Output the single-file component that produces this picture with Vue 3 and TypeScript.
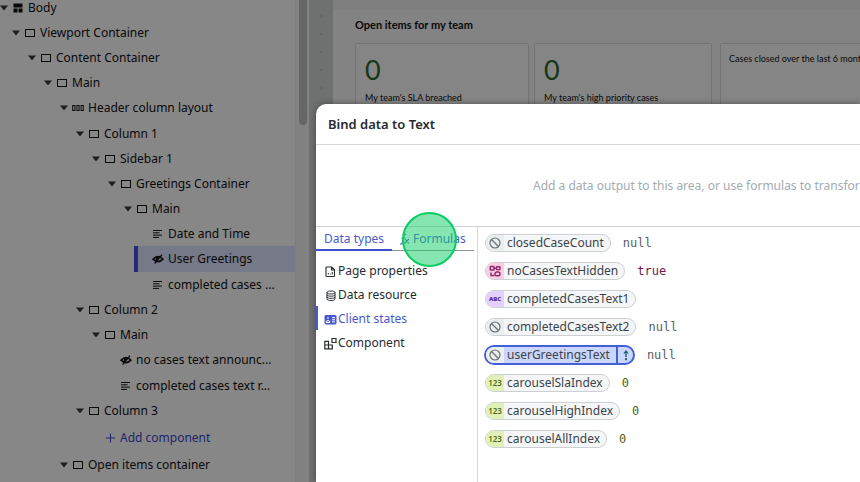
<script setup lang="ts">
import { ref } from 'vue'

type RowIcon = 'body' | 'box' | 'columns' | 'text' | 'hidden' | 'add'

interface TreeRow {
  label: string
  depth: number
  icon: RowIcon
  open?: boolean
  selected?: boolean
}

const rows: TreeRow[] = [
  { label: 'Body', depth: 0, icon: 'body', open: true },
  { label: 'Viewport Container', depth: 1, icon: 'box', open: true },
  { label: 'Content Container', depth: 2, icon: 'box', open: true },
  { label: 'Main', depth: 3, icon: 'box', open: true },
  { label: 'Header column layout', depth: 4, icon: 'columns', open: true },
  { label: 'Column 1', depth: 5, icon: 'box', open: true },
  { label: 'Sidebar 1', depth: 6, icon: 'box', open: true },
  { label: 'Greetings Container', depth: 7, icon: 'box', open: true },
  { label: 'Main', depth: 8, icon: 'box', open: true },
  { label: 'Date and Time', depth: 9, icon: 'text' },
  { label: 'User Greetings', depth: 9, icon: 'hidden', selected: true },
  { label: 'completed cases ...', depth: 9, icon: 'text' },
  { label: 'Column 2', depth: 5, icon: 'box', open: true },
  { label: 'Main', depth: 6, icon: 'box', open: true },
  { label: 'no cases text announc...', depth: 7, icon: 'hidden' },
  { label: 'completed cases text r...', depth: 7, icon: 'text' },
  { label: 'Column 3', depth: 5, icon: 'box', open: true },
  { label: 'Add component', depth: 6, icon: 'add' },
  { label: 'Open items container', depth: 4, icon: 'box', open: true },
]

type Section = 'page' | 'data' | 'client' | 'component'
const sections: { id: Section; label: string }[] = [
  { id: 'page', label: 'Page properties' },
  { id: 'data', label: 'Data resource' },
  { id: 'client', label: 'Client states' },
  { id: 'component', label: 'Component' },
]
const activeSection = ref<Section>('client')

type Kind = 'null' | 'boolean' | 'string' | 'number'
const states: { name: string; kind: Kind; value: string }[] = [
  { name: 'closedCaseCount', kind: 'null', value: 'null' },
  { name: 'noCasesTextHidden', kind: 'boolean', value: 'true' },
  { name: 'completedCasesText1', kind: 'string', value: '' },
  { name: 'completedCasesText2', kind: 'null', value: 'null' },
  { name: 'userGreetingsText', kind: 'null', value: 'null' },
  { name: 'carouselSlaIndex', kind: 'number', value: '0' },
  { name: 'carouselHighIndex', kind: 'number', value: '0' },
  { name: 'carouselAllIndex', kind: 'number', value: '0' },
]
const activeState = ref('userGreetingsText')
</script>

<template>
  <div class="app">
    <aside class="sidebar">
      <ul class="tree">
        <li
          v-for="(row, i) in rows"
          :key="i"
          class="row"
          :class="[row.icon, { selected: row.selected }]"
          :style="{ '--depth': row.depth }"
        >
          <svg v-if="row.open" class="caret" viewBox="0 0 8 6"><path d="M0 .5h8L4 5.5z" /></svg>
          <span v-else class="caret"></span>
          <svg class="icon" viewBox="0 0 12 12">
            <path v-if="row.icon === 'body'" fill="currentColor" d="M1.5 1.5h9v4h-9zM1.5 6.5h4v4h-4zM6.5 6.5h4v4h-4z" />
            <rect v-else-if="row.icon === 'box'" x="1.5" y="2.5" width="9" height="7" fill="none" stroke="currentColor" />
            <g v-else-if="row.icon === 'columns'" fill="none" stroke="currentColor">
              <rect x=".7" y="3.5" width="2.2" height="5" /><rect x="4.9" y="3.5" width="2.2" height="5" /><rect x="9.1" y="3.5" width="2.2" height="5" />
            </g>
            <path v-else-if="row.icon === 'text'" stroke="currentColor" d="M1 2.5h9M1 4.8h6.5M1 7.1h9M1 9.4h6" />
            <g v-else-if="row.icon === 'hidden'" fill="none" stroke="currentColor">
              <path d="M1 6.2Q6 1 11 6.2Q6 11 1 6.2z" stroke-width="1.6" />
              <path d="M4.4 4.2v3.6l3.4-3.6z" fill="currentColor" />
              <path d="M2.6 10.6l7.4-9" stroke-width="1.3" />
            </g>
            <path v-else stroke="currentColor" d="M6.5 1.5v9M2 6h9" />
          </svg>
          <button v-if="row.icon === 'add'" type="button" class="add-button">{{ row.label }}</button>
          <span v-else class="label">{{ row.label }}</span>
        </li>
      </ul>
      <div class="gutter"><div class="thumb"></div></div>
    </aside>

    <main class="canvas">
      <div class="page">
        <div class="toolbar"></div>
        <section class="board">
          <h2>Open items for my team</h2>
          <div class="cards">
            <article class="card"><strong>0</strong><p>My team's SLA breached</p></article>
            <article class="card"><strong>0</strong><p>My team's high priority cases</p></article>
            <article class="card chart"><p>Cases closed over the last 6 months</p></article>
          </div>
        </section>
      </div>
    </main>

    <div class="backdrop"></div>

    <section class="dialog" role="dialog" aria-labelledby="dialog-title">
      <header class="dialog-head"><h1 id="dialog-title">Bind data to Text</h1></header>
      <p class="drop-area">Add a data output to this area, or use formulas to transform data</p>
      <div class="dialog-body">
        <div class="source">
          <div class="tabs" role="tablist">
            <button type="button" role="tab" class="tab active" aria-selected="true">Data types</button>
            <button type="button" role="tab" class="tab formulas" aria-selected="false">
              <svg class="fx" viewBox="0 0 10 12">
                <path d="M0 11c2 .4 2.5-1 2.8-3L3.6 3.5C4 1.500 5 1 6.200 1.500M1.500 5h4M5 6l4 4.500M9 6l-4.500 4.500" fill="none" stroke="currentColor" stroke-width="1.100" />
              </svg>Formulas
              <span class="cursor"></span>
            </button>
          </div>
          <nav class="sections">
            <button
              v-for="s in sections"
              :key="s.id"
              type="button"
              class="section"
              :class="{ active: s.id === activeSection }"
              @click="activeSection = s.id"
            >
              <svg viewBox="0 0 13 13" class="section-icon" fill="none" stroke="currentColor">
                <template v-if="s.id === 'page'">
                  <path d="M2 2.800q0-.8.8-.8h5l2.700 2.700v6q0 .8-.8.8H2.800q-.8 0-.8-.8zM7.500 2v3h3" stroke-width="1.100" />
                  <path d="M4.300 9.500V8M6.300 9.500v-.9M8.300 9.500V7" />
                </template>
                <template v-else-if="s.id === 'data'">
                  <path d="M3 3.500c0-2 8-2 8 0v6.500c0 2-8 2-8 0zM3 3.500c0 2 8 2 8 0M3 5.700c0 2 8 2 8 0M3 7.900c0 2 8 2 8 0" />
                </template>
                <template v-else-if="s.id === 'client'">
                  <rect x=".5" y="2" width="12" height="9.500" rx="1.500" fill="currentColor" stroke="none" />
                  <path d="M8 4.700h3M8 6.800h3M8 8.900h3M2 9.500q0-2 2-2t2 2zM4 4v2" stroke="#fff" />
                </template>
                <template v-else>
                  <path d="M.8 4.300h3.700v7.500H.8zM.8 8h7.500v3.800H4.500V8M8 1.500h4v4H8z" stroke-width="1.200" />
                </template>
              </svg>
              <span>{{ s.label }}</span>
            </button>
          </nav>
        </div>
        <ul class="states">
          <li v-for="s in states" :key="s.name" class="state">
            <button type="button" class="chip" :class="[s.kind, { active: s.name === activeState }]" @click="activeState = s.name">
              <span class="badge">
                <svg v-if="s.kind === 'null'" viewBox="0 0 12 12" class="glyph"><g fill="none" stroke="currentColor" stroke-width="1.200"><circle cx="6" cy="6" r="5" /><path d="M2.500 2.500l7 7" /></g></svg>
                <svg v-else-if="s.kind === 'boolean'" viewBox="0 0 12 12" class="glyph">
                  <g fill="none" stroke="currentColor" stroke-width="1.400"><rect x="1.200" y="1.500" width="3.800" height="3.500" rx=".5" /><rect x="7.500" y="1.800" width="3.500" height="2.800" rx=".5" /><path d="M5 3.300h2.500M2 7.500v3h3.500" /><rect x="6" y="7" width="5" height="3.800" rx="1.800" /></g>
                </svg>
                <span v-else-if="s.kind === 'string'" class="abc">ABC</span>
                <span v-else class="num">123</span>
              </span>
              <span class="name">{{ s.name }}</span>
              <span v-if="s.name === activeState" class="expand">
                <svg viewBox="0 0 8 12"><path d="M4 1L1.300 4.500h5.400zM3.300 4h1.400v4H3.300zM3 9.200h2v2H3z" fill="currentColor" /></svg>
              </span>
            </button>
            <code :class="s.kind">{{ s.value }}</code>
          </li>
        </ul>
      </div>
    </section>
  </div>
</template>

<style>
body {
  overflow: hidden;
}
</style>

<style scoped>
* {
  box-sizing: border-box;
}
.app {
  position: relative;
  display: flex;
  height: 100vh;
  overflow: hidden;
  background: #fff;
  font-family: 'Noto Sans', 'Open Sans', sans-serif;
  font-size: 12px;
  color: #111;
}
button {
  border: 0;
  padding: 0;
  background: none;
  font: inherit;
  color: inherit;
}
ul, h1, h2, p {
  margin: 0;
  padding: 0;
  list-style: none;
}
.sidebar {
  display: flex;
  flex: none;
  width: 309px;
  overflow: hidden;
}
.tree {
  flex: 1;
  min-width: 0;
  margin-top: -5px;
}
.row {
  display: flex;
  align-items: center;
  height: 25px;
  padding-left: calc(var(--depth) * 16px - 4px);
  white-space: nowrap;
}
.row.columns,
.row.hidden {
  height: 26px;
}
.row.add {
  height: 29px;
}
.row.selected {
  margin-left: 134px;
  padding-left: 2px;
  border-left: 4px solid #4450e0;
  background: #dfe4ff;
}
.caret {
  flex: none;
  width: 8px;
  height: 6px;
  margin-right: 4px;
  fill: #3a3a3a;
}
.icon {
  flex: none;
  width: 12px;
  height: 12px;
  margin-right: 4px;
}
.row .label,
.row .add-button {
  line-height: 18px;
}
.row.add {
  color: #3f45d4;
}
.gutter {
  flex: none;
  width: 14px;
  padding-left: 3px;
  background: #f6f6f6;
  border-left: 1px solid #eee;
}
.thumb {
  width: 8px;
  height: 125px;
  border-radius: 0 0 4px 4px;
  background: #c1c1c1;
}
.canvas {
  flex: 1;
  min-width: 0;
  padding-left: 24px;
  background-color: #d2d6d6;
  background-image: radial-gradient(circle, #bcc2c2 1px, transparent 1px);
  background-size: 18px 18px;
  background-position: 3px 7px;
}
.page {
  height: 100%;
  background: #f7f7f7;
  overflow: hidden;
}
.toolbar {
  height: 10px;
  background: #f0f0f0;
}
.board {
  padding: 6px 0 0 22px;
  font-family: Lato, sans-serif;
}
.board h2 {
  font-size: 11px;
  line-height: 18px;
  font-weight: 700;
}
.cards {
  display: grid;
  grid-template-columns: 174px 178px 178px;
  gap: 5px;
  margin-top: 9px;
}
.card {
  height: 130px;
  padding: 8px 9px;
  border: 1px solid #dcdcdc;
  border-radius: 2px;
  background: #fcfcfc;
  font-size: 9px;
}
.card strong {
  display: block;
  font-size: 27px;
  font-weight: 400;
  line-height: 36px;
  color: #2c6a2c;
}
.card p {
  margin-top: 3px;
  line-height: 14px;
  white-space: nowrap;
}
.card.chart {
  margin-left: 3px;
  padding: 5px 8px;
}
.backdrop {
  position: absolute;
  inset: 0;
  background: rgba(0, 0, 0, 0.47);
}
.dialog {
  position: absolute;
  top: 104px;
  left: 316px;
  right: 0;
  bottom: 0;
  display: flex;
  flex-direction: column;
  overflow: hidden;
  border-top-left-radius: 10px;
  background: #fff;
  box-shadow: 0 0 6px rgba(0, 0, 0, 0.4);
  color: #262b30;
}
.dialog-head {
  padding: 11px 12px 10px;
  border-bottom: 1px solid #d5d9da;
}
.dialog-head h1 {
  font-size: 13px;
  line-height: 19px;
  font-weight: 600;
}
.drop-area {
  padding: 32px 0 31px 217px;
  border-bottom: 1px solid #cfd4d4;
  line-height: 18px;
  white-space: nowrap;
  color: #a3abb0;
}
.dialog-body {
  display: flex;
  flex: 1;
}
.source {
  width: 162px;
  border-right: 1px solid #d5d9da;
}
.tabs {
  display: flex;
  height: 24px;
  margin-right: 3px;
  color: #4a5bd0;
}
.tab {
  padding: 0 8px;
  border-bottom: 1px solid #8c9498;
  white-space: nowrap;
}
.tab.active {
  border-bottom: 2px solid #3c50cc;
}
.formulas {
  position: relative;
  flex: 1;
  display: flex;
  align-items: center;
}
.fx {
  width: 10px;
  height: 12px;
  margin-right: 3px;
}
.cursor {
  position: absolute;
  left: 10px;
  top: -15px;
  width: 55px;
  height: 55px;
  border: 2px solid #0bcc63;
  border-radius: 50%;
  background: rgba(14, 205, 99, 0.5);
}
.sections {
  padding-top: 7px;
}
.section {
  display: flex;
  align-items: center;
  width: 100%;
  height: 24px;
  padding-left: 6px;
  border-left: 2px solid transparent;
}
.section.active {
  border-color: #4659cc;
  color: #4659cc;
}
.section-icon {
  width: 13px;
  height: 13px;
  margin: 3px 1px 0 0;
}
.states {
  padding: 2px 0 0 7px;
}
.state {
  display: flex;
  align-items: center;
  gap: 12px;
  height: 28px;
}
.chip {
  display: flex;
  align-items: stretch;
  height: 18px;
  overflow: hidden;
  border: 1px solid #ccd0d2;
  border-radius: 9px;
  background: #f5f6f7;
  line-height: 16px;
  color: #3c4449;
}
.chip.active {
  height: 20px;
  margin-left: -1px;
  border: 2px solid #4460d8;
  border-radius: 10px;
  background: #cbd6fc;
}
.badge {
  display: flex;
  align-items: center;
  justify-content: center;
  width: 18px;
  background: #ebeeee;
  color: #687074;
}
.glyph {
  width: 12px;
  height: 12px;
}
.boolean .badge {
  background: #f8cde6;
  color: #922766;
}
.string .badge {
  background: #e5cffb;
  color: #59268c;
}
.number .badge {
  background: #e2f1b8;
  color: #536b13;
}
.abc {
  font-size: 6px;
  font-weight: 800;
}
.num {
  font-size: 8px;
  font-weight: 600;
}
.name {
  padding: 0 6px 0 3px;
}
.expand {
  display: flex;
  align-items: center;
  width: 17px;
  padding-left: 4px;
  border-left: 2px solid #4460d8;
  color: #155f68;
}
.expand svg {
  width: 8px;
  height: 12px;
}
code {
  font-family: 'DejaVu Sans Mono', monospace;
  font-size: 12px;
  line-height: 18px;
  color: #596064;
}
code.boolean {
  color: #6f1850;
}
code.number {
  color: #4f6413;
}
</style>
